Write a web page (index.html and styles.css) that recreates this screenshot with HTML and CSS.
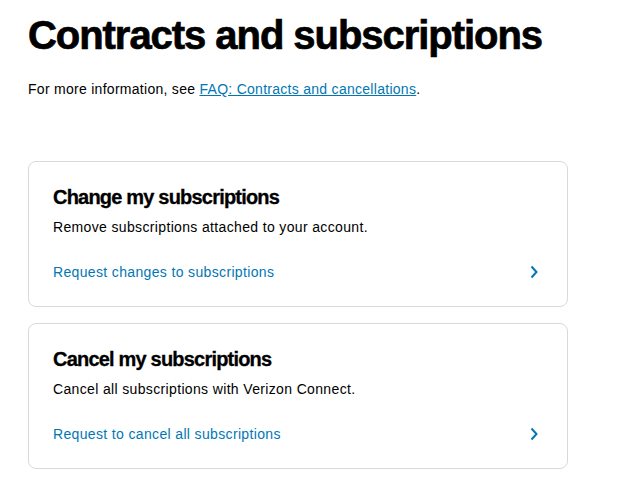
FILE: index.html
```html
<!DOCTYPE html>
<html lang="en">
<head>
<meta charset="utf-8">
<title>Contracts and subscriptions</title>
<link rel="stylesheet" href="styles.css">
</head>
<body>
<main class="page">
  <h1 class="title">Contracts and subscriptions</h1>
  <p class="intro">For more information, see <a class="intro-link" href="#">FAQ: Contracts and cancellations</a>.</p>

  <div class="cards">
    <section class="card">
      <h2 class="card-title">Change my subscriptions</h2>
      <p class="card-text">Remove subscriptions attached to your account.</p>
      <a class="card-action" href="#">
        <span>Request changes to subscriptions</span>
        <svg class="chevron" width="8" height="14" viewBox="0 0 8 14" aria-hidden="true"><path d="M1.5 1.5 L6.5 7 L1.5 12.5" fill="none" stroke="#0077b4" stroke-width="2"/></svg>
      </a>
    </section>

    <section class="card">
      <h2 class="card-title">Cancel my subscriptions</h2>
      <p class="card-text">Cancel all subscriptions with Verizon Connect.</p>
      <a class="card-action" href="#">
        <span>Request to cancel all subscriptions</span>
        <svg class="chevron" width="8" height="14" viewBox="0 0 8 14" aria-hidden="true"><path d="M1.5 1.5 L6.5 7 L1.5 12.5" fill="none" stroke="#0077b4" stroke-width="2"/></svg>
      </a>
    </section>
  </div>
</main>
</body>
</html>
```

FILE: styles.css
```css
html, body {
  margin: 0;
  padding: 0;
  background: #ffffff;
}

body {
  font-family: "Liberation Sans", Arial, sans-serif;
  color: #000000;
}

.page {
  padding: 15px 0 0 28px;
  width: 540px;
}

.title {
  margin: 0;
  font-size: 40px;
  line-height: 40px;
  font-weight: 700;
  letter-spacing: -1.05px;
  -webkit-text-stroke: 0.7px #000000;
}

.intro {
  margin: 24px 0 0;
  font-size: 14px;
  line-height: 20px;
  letter-spacing: 0.28px;
}

.intro-link {
  color: #0077b4;
  text-decoration: underline;
}

.cards {
  margin-top: 62px;
  display: flex;
  flex-direction: column;
  gap: 16px;
}

.card {
  border: 1px solid #d8dada;
  border-radius: 8px;
  padding: 23px 24px 24px;
}

.card-title {
  margin: 0;
  font-size: 20px;
  line-height: 24px;
  font-weight: 700;
  letter-spacing: -0.8px;
  -webkit-text-stroke: 0.3px #000000;
}

.card-text {
  margin: 8px 0 0;
  font-size: 14px;
  line-height: 20px;
  letter-spacing: 0.35px;
}

.card-action {
  margin-top: 25px;
  display: flex;
  align-items: center;
  justify-content: space-between;
  font-size: 14px;
  line-height: 20px;
  letter-spacing: 0.35px;
  color: #0077b4;
  text-decoration: none;
}

.chevron {
  display: block;
  margin-right: 5px;
}
```
